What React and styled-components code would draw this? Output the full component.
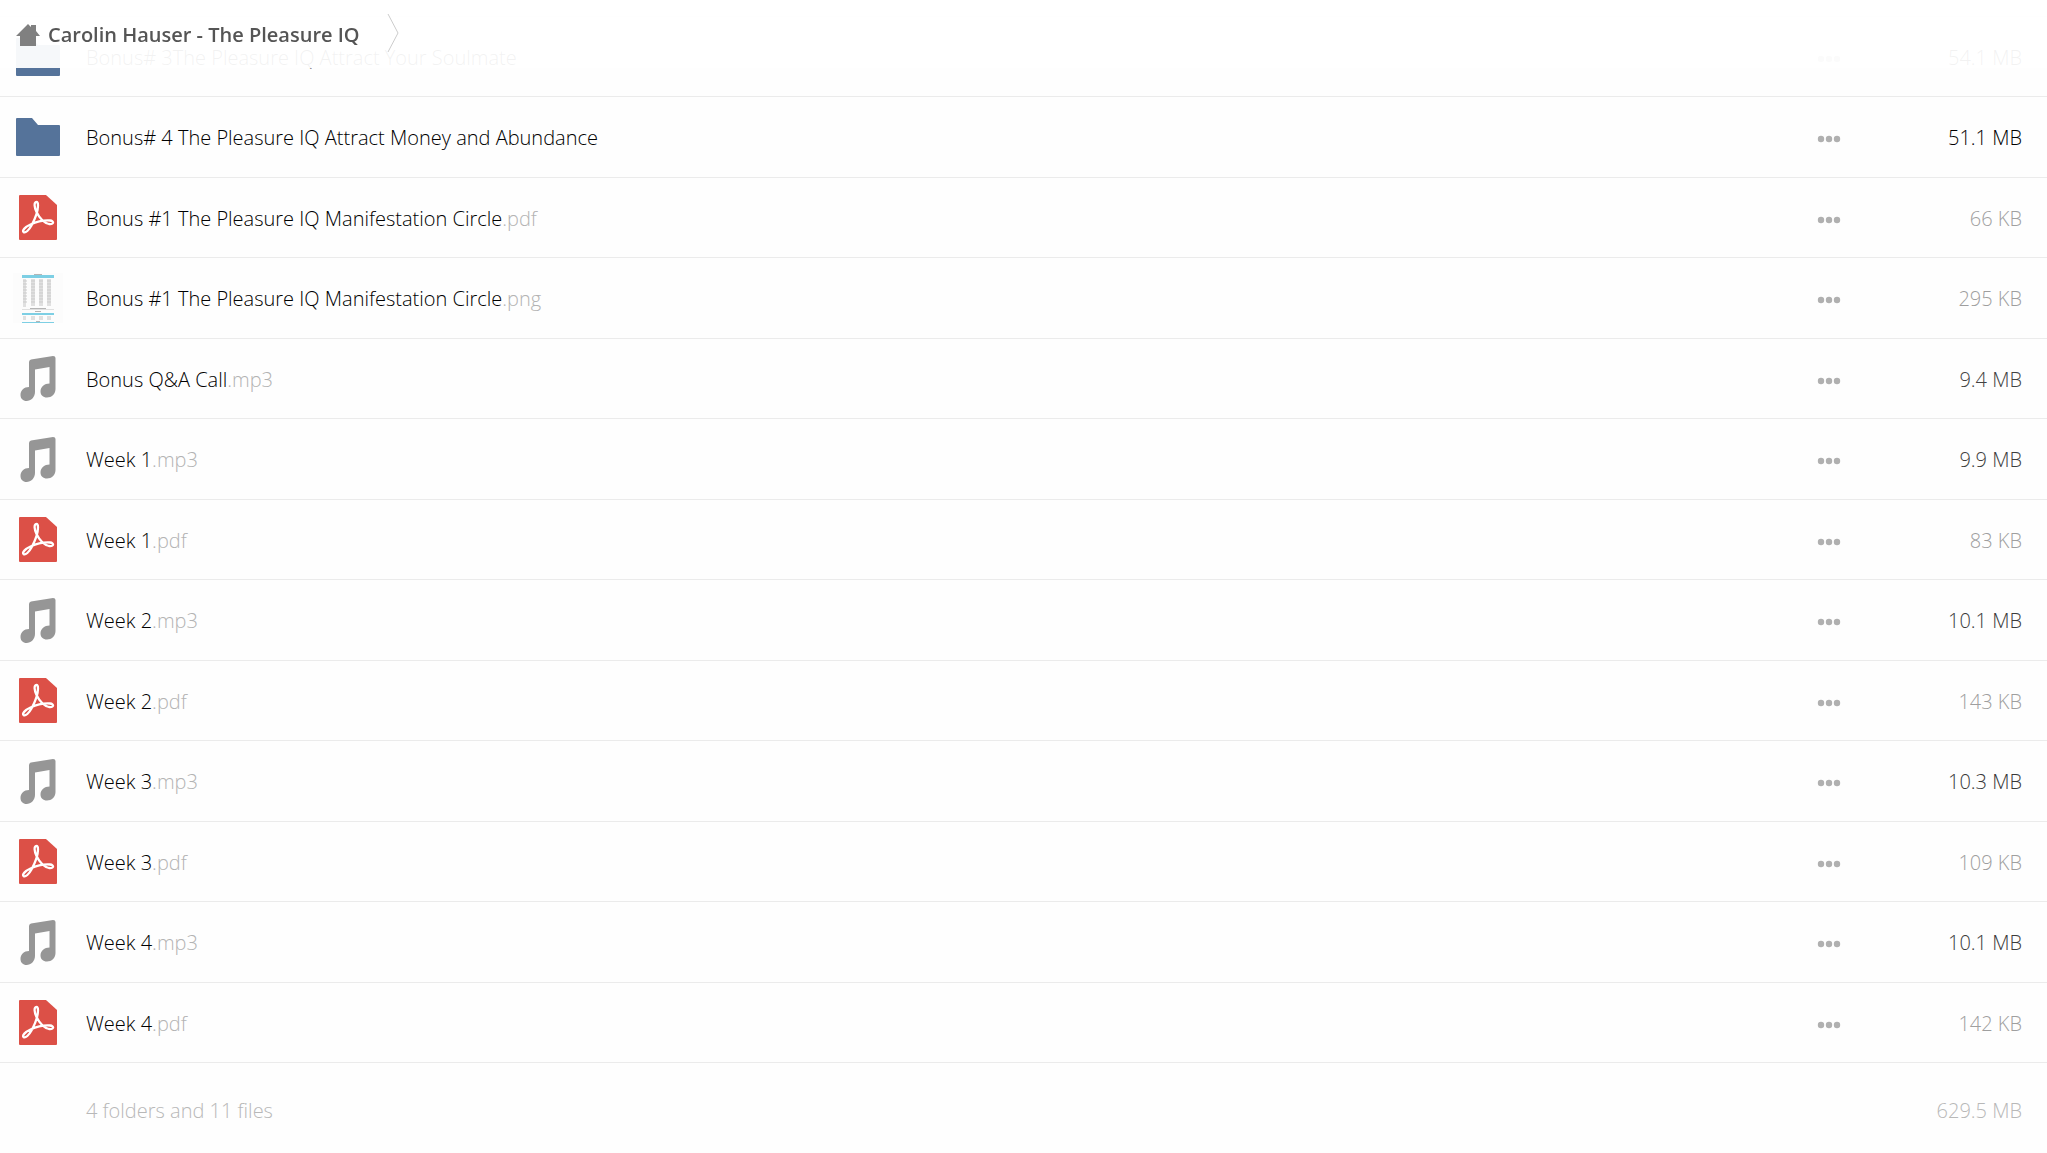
import styled, { createGlobalStyle } from "styled-components";

const files = [
  { name: "Bonus# 3The Pleasure IQ Attract Your Soulmate", type: "folder", size: "54.1 MB", tone: "#000" },
  { name: "Bonus# 4 The Pleasure IQ Attract Money and Abundance", type: "folder", size: "51.1 MB", tone: "#000" },
  { name: "Bonus #1 The Pleasure IQ Manifestation Circle", type: "pdf", size: "66 KB", tone: "#a0a0a0" },
  { name: "Bonus #1 The Pleasure IQ Manifestation Circle", type: "png", size: "295 KB", tone: "#9e9e9e" },
  { name: "Bonus Q&A Call", type: "mp3", size: "9.4 MB", tone: "#424242" },
  { name: "Week 1", type: "mp3", size: "9.9 MB", tone: "#3d3d3d" },
  { name: "Week 1", type: "pdf", size: "83 KB", tone: "#9f9f9f" },
  { name: "Week 2", type: "mp3", size: "10.1 MB", tone: "#3b3b3b" },
  { name: "Week 2", type: "pdf", size: "143 KB", tone: "#9f9f9f" },
  { name: "Week 3", type: "mp3", size: "10.3 MB", tone: "#393939" },
  { name: "Week 3", type: "pdf", size: "109 KB", tone: "#9f9f9f" },
  { name: "Week 4", type: "mp3", size: "10.1 MB", tone: "#3b3b3b" },
  { name: "Week 4", type: "pdf", size: "142 KB", tone: "#9f9f9f" },
];

function FolderIcon() {
  return (
    <svg width="44" height="38" viewBox="0 0 44 38" aria-hidden="true">
      <path
        fill="#55739a"
        d="M1 0H16L22 7H43Q44 7 44 8V37Q44 38 43 38H1Q0 38 0 37V1Q0 0 1 0Z"
      />
    </svg>
  );
}

function PdfIcon() {
  return (
    <svg width="38" height="45" viewBox="0 0 38 45" aria-hidden="true">
      <path
        fill="#dc5047"
        d="M1 0H27L38 10V44Q38 45 37 45H1Q0 45 0 44V1Q0 0 1 0Z"
      />
      <path
        fill="none"
        stroke="#fff"
        strokeWidth="2.3"
        strokeLinejoin="round"
        d="M17.500 7C14.500 7 15.500 13 17.500 17C20 22 24 27.500 30 29C35 29.500 35.500 26 31 25.500C25 25 17 27 11.500 29.500C6 32 3 35.500 4.500 37C6.500 38.500 10 35 12.500 30.500C16 24 19 16 19 10.500C19 8.500 18.600 7 17.500 7Z"
      />
    </svg>
  );
}

function MusicIcon() {
  return (
    <svg width="36" height="45" viewBox="0 0 36 45" aria-hidden="true">
      <path
        fill="#969696"
        d="M11 3.500L33 0Q35.500 0 35.500 2V33C35.500 38 31.500 41.500 27 41.500C23 41.500 20.500 39 20.500 35.500C20.500 31 24.500 27.500 29.500 27.500V11L15 13.500V36C15 41 11 45 6.500 45C3 45 0.500 42.500 0.500 39C0.500 34.500 4 31 9 31V6Q9 4 11 3.500Z"
      />
    </svg>
  );
}

const tableRows = [8, 11, 14, 17, 20, 23, 26, 29];

function ImagePreview() {
  return (
    <svg width="50" height="50" viewBox="0 0 50 50" aria-hidden="true">
      <path fill="#fcfcfc" d="M0 0H50V50H0Z" />
      <path fill="#b5b5b5" d="M21 1H29V2H21ZM17 35H33V36H17ZM22 38H28V39H22ZM23 48H27V49H23Z" />
      <path fill="#e0e0e0" d="M9 36H41V37H9Z" />
      <path fill="#7dcfe4" d="M9 2H41V5H9ZM9 40H41V42H9ZM9 49H41V50H9Z" />
      <path fill="#e0e0e0" d="M10 6H13V34H10ZM18 6H22V33H18ZM26 6H30V33H26ZM34 6H38V33H34ZM10 43H13V47H10ZM18 43H22V47H18ZM26 43H30V47H26ZM34 43H38V47H34Z" />
      {tableRows.map((y) => (
        <path key={y} stroke="#cbcbcb" d={`M10 ${y}h4m4 0h4m4 0h4m4 0h4`} />
      ))}
    </svg>
  );
}

const icons = {
  folder: FolderIcon,
  pdf: PdfIcon,
  png: ImagePreview,
  mp3: MusicIcon,
};

function FileRow({ file }) {
  const Icon = icons[file.type];
  return (
    <Row>
      <IconCell>
        <Icon />
      </IconCell>
      <NameCell>
        <FileLink href="#">
          {file.name}
          {file.type !== "folder" && <Extension>.{file.type}</Extension>}
        </FileLink>
      </NameCell>
      <ActionCell>
        <MoreButton type="button" aria-label={`Actions for ${file.name}`}>
          <svg width="24" height="8" viewBox="0 0 24 8" fill="#b0b0b0">
            <circle cx="4" cy="4" r="3.200" />
            <circle cx="12" cy="4" r="3.200" />
            <circle cx="20" cy="4" r="3.200" />
          </svg>
        </MoreButton>
      </ActionCell>
      <SizeCell tone={file.tone}>{file.size}</SizeCell>
    </Row>
  );
}

function App() {
  return (
    <>
      <GlobalStyle />
      <Controls>
        <HomeLink href="#">
          <svg width="24" height="22" viewBox="0 0 24 22" aria-hidden="true">
            <path
              fill="#808080"
              d="M12 0L15 3V1H20V7L24 12H20V22H4V12H0Z"
            />
          </svg>
          Carolin Hauser - The Pleasure IQ
        </HomeLink>
        <svg width="12" height="40" viewBox="0 0 12 40" aria-hidden="true">
          <path fill="none" stroke="#ccc" d="M1 0L11 19L1 38" />
        </svg>
      </Controls>
      <FileTable>
        <tbody>
          {files.map((file, index) => (
            <FileRow key={index} file={file} />
          ))}
        </tbody>
        <tfoot>
          <SummaryRow>
            <IconCell />
            <NameCell>4 folders and 11 files</NameCell>
            <ActionCell />
            <SizeCell tone="#b8b8b8">629.5 MB</SizeCell>
          </SummaryRow>
        </tfoot>
      </FileTable>
    </>
  );
}

const GlobalStyle = createGlobalStyle`
  * {
    box-sizing: border-box;
  }
  body {
    margin: 0;
    background: #fefefe;
    color: #000;
    font-family: "Open Sans", sans-serif;
    font-size: 20px;
    font-weight: 300;
    line-height: 28px;
  }
  svg {
    display: block;
  }
`;

const Controls = styled.header`
  position: fixed;
  z-index: 1;
  top: 0;
  left: 0;
  right: 0;
  height: 68px;
  padding: 14px 16px;
  display: flex;
  align-items: flex-start;
  gap: 27px;
  background: rgba(255, 255, 255, 0.95);
`;

const HomeLink = styled.a`
  display: flex;
  align-items: center;
  gap: 8px;
  padding-top: 7px;
  color: #555;
  font-weight: 600;
  text-decoration: none;
`;

const FileTable = styled.table`
  width: 100%;
  margin-top: 16px;
  border-collapse: separate;
  border-spacing: 0;
  border-top: 1px solid #ebebeb;
`;

const Row = styled.tr`
  height: 80px;

  &:nth-child(even) {
    height: 81px;
  }

  td {
    border-bottom: 1px solid #ebebeb;
  }
`;

const SummaryRow = styled.tr`
  height: 94px;
  color: #b8b8b8;
`;

const IconCell = styled.td`
  width: 76px;
  padding: 0;

  svg {
    margin: 0 auto;
  }
`;

const NameCell = styled.td`
  padding: 2px 0 0 10px;
`;

const FileLink = styled.a`
  color: #000;
  text-decoration: none;
`;

const Extension = styled.span`
  color: #b3b3b3;
`;

const ActionCell = styled.td`
  width: 48px;
  padding: 4px 0 0;
`;

const MoreButton = styled.button`
  display: block;
  padding: 12px;
  border: 0;
  background: transparent;
`;

const SizeCell = styled.td`
  width: 194px;
  padding: 2px 25px 0 0;
  color: ${({ tone }) => tone};
  text-align: right;
`;

export default App;
